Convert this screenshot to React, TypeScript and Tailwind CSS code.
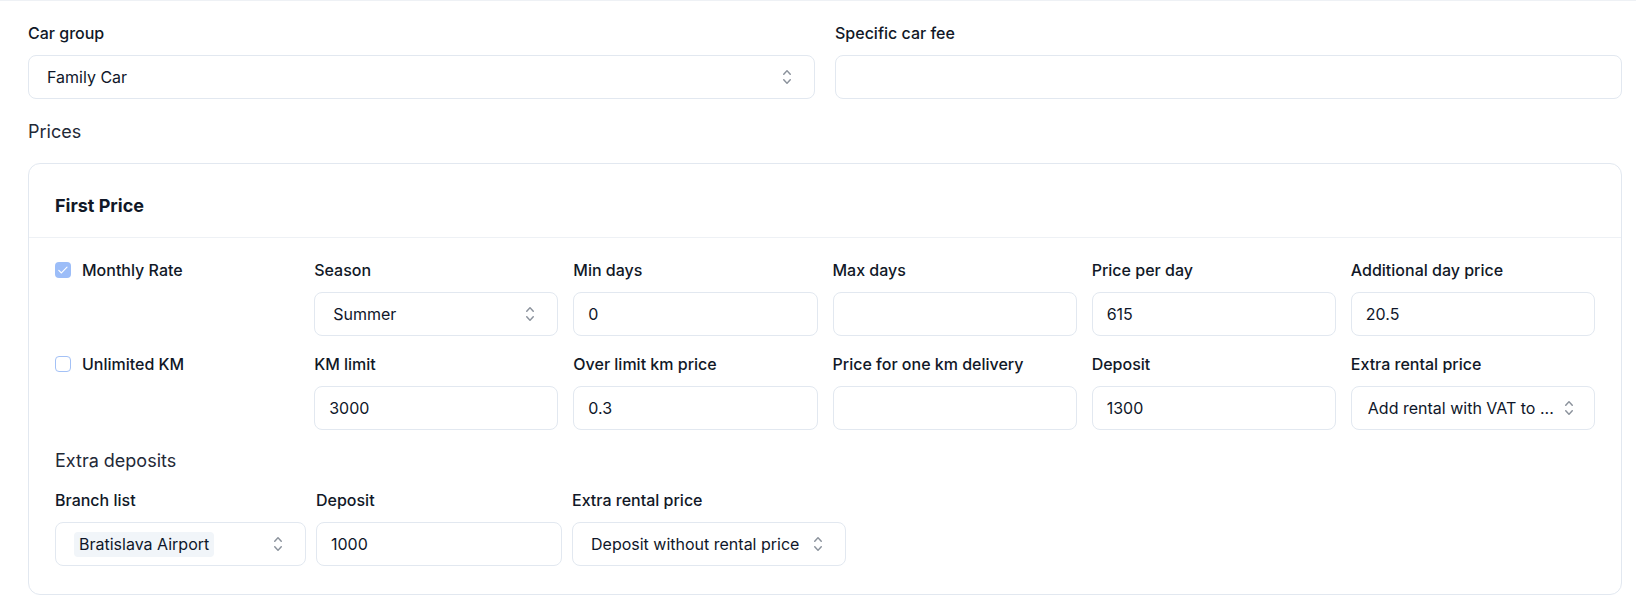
import React from "react";

function UpDown() {
  return (
    <svg
      viewBox="0 0 20 20"
      fill="currentColor"
      className="h-5 w-5 shrink-0 text-[#8b929c]"
    >
      <path
        fillRule="evenodd"
        d="M10 3a.75.75 0 01.55.24l3.25 3.5a.75.75 0 11-1.1 1.02L10 4.852 7.3 7.76a.75.75 0 01-1.1-1.02l3.25-3.5A.75.75 0 0110 3zm-3.76 9.2a.75.75 0 011.06.04l2.7 2.908 2.7-2.908a.75.75 0 111.1 1.02l-3.25 3.5a.75.75 0 01-1.1 0l-3.25-3.5a.75.75 0 01.04-1.06z"
        clipRule="evenodd"
      />
    </svg>
  );
}

function Label({ children }: { children: React.ReactNode }) {
  return (
    <div className="text-base font-medium leading-5 text-[#111827]">{children}</div>
  );
}

function TextInput({ value }: { value?: string }) {
  return (
    <div className="mt-3 flex h-11 items-center rounded-lg border border-[#e2e8f0] bg-white px-[14px] text-base text-[#0f172a]">
      {value}
    </div>
  );
}

function Select({
  value,
  chip,
  tight,
}: {
  value: string;
  chip?: boolean;
  tight?: boolean;
}) {
  return (
    <div
      className={
        tight
          ? "mt-3 flex h-11 items-center justify-between rounded-lg border border-[#e2e8f0] bg-white pl-4 pr-[15px] text-base text-[#0f172a]"
          : "mt-3 flex h-11 items-center justify-between gap-1 rounded-lg border border-[#e2e8f0] bg-white pl-[18px] pr-[17px] text-base text-[#0f172a]"
      }
    >
      {chip ? (
        <span className="flex h-[25px] items-center rounded-[4px] bg-[#f1f5f9] px-[5px]">
          {value}
        </span>
      ) : (
        <span className="whitespace-nowrap">{value}</span>
      )}
      <UpDown />
    </div>
  );
}

function Field({
  label,
  value,
  select,
  chip,
  tight,
}: {
  label: string;
  value?: string;
  select?: boolean;
  chip?: boolean;
  tight?: boolean;
}) {
  return (
    <div className="min-w-0">
      <Label>{label}</Label>
      {select ? (
        <Select value={value ?? ""} chip={chip} tight={tight} />
      ) : (
        <TextInput value={value} />
      )}
    </div>
  );
}

function Checkbox({ checked, label }: { checked?: boolean; label: string }) {
  return (
    <div className="flex h-5 items-center gap-[11px]">
      {checked ? (
        <span className="flex h-4 w-4 items-center justify-center rounded-[4px] bg-[#9cbdf8]">
          <svg viewBox="0 0 16 16" className="h-[14px] w-[14px]" fill="none">
            <path
              d="M3.2 8.4l3 3 6.4-6.6"
              stroke="white"
              strokeWidth="1.3"
              strokeLinecap="round"
              strokeLinejoin="round"
            />
          </svg>
        </span>
      ) : (
        <span className="h-4 w-4 rounded-[4px] border border-[#a3c1f6] bg-white" />
      )}
      <span className="text-base font-medium text-[#111827]">{label}</span>
    </div>
  );
}

export default function App() {
  return (
    <div className="min-h-screen border-t border-[#eef1f5] bg-white pl-7 pr-[14px] pt-[22px] font-['Inter','Liberation_Sans',sans-serif] text-[#111827]">
      {/* Top fields */}
      <div className="grid grid-cols-2 gap-5">
        <Field label="Car group" value="Family Car" select />
        <Field label="Specific car fee" />
      </div>

      <div className="mt-[21px] text-lg leading-6 text-[#1f2937]">Prices</div>

      {/* Price card */}
      <div className="mt-[19px] rounded-xl border border-[#e2e8f0]">
        <div className="border-b border-[#eef1f5] px-[26px] pb-[19px] pt-[30px]">
          <h3 className="text-lg font-bold leading-6 text-[#111827]">First Price</h3>
        </div>

        <div className="px-[26px] pb-[28px] pt-[22px]">
          <div className="grid grid-cols-6 gap-x-[15px] gap-y-[18px]">
            <Checkbox checked label="Monthly Rate" />
            <Field label="Season" value="Summer" select />
            <Field label="Min days" value="0" />
            <Field label="Max days" />
            <Field label="Price per day" value="615" />
            <Field label="Additional day price" value="20.5" />

            <Checkbox label="Unlimited KM" />
            <Field label="KM limit" value="3000" />
            <Field label="Over limit km price" value="0.3" />
            <Field label="Price for one km delivery" />
            <Field label="Deposit" value="1300" />
            <Field label="Extra rental price" value="Add rental with VAT to ..." select tight />
          </div>

          <div className="mt-[19px] text-lg leading-6 text-[#1f2937]">Extra deposits</div>

          <div className="mt-[17px] flex gap-[10px]">
            <div className="w-[251px]">
              <Field label="Branch list" value="Bratislava Airport" select chip />
            </div>
            <div className="w-[246px]">
              <Field label="Deposit" value="1000" />
            </div>
            <div className="w-[274px]">
              <Field label="Extra rental price" value="Deposit without rental price" select />
            </div>
          </div>
        </div>
      </div>
    </div>
  );
}
